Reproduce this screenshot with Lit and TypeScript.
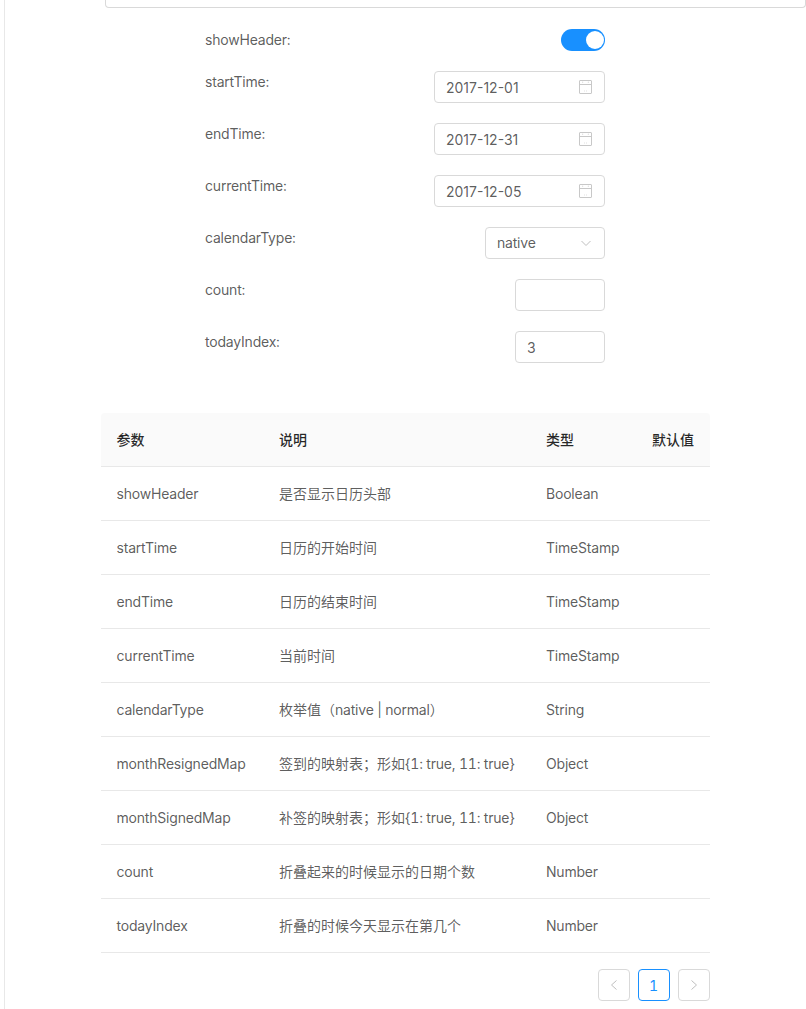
import { LitElement, html, css, svg } from "lit";
import { customElement } from "lit/decorators.js";

const calendar = svg`<path d="M1 .5h11a.5.5 0 0 1 .5.5v12a.5.5 0 0 1-.5.5H1a.5.5 0 0 1-.5-.5V1A.5.5 0 0 1 1 .5zM.5 4.5h12" fill="none" stroke="currentColor" stroke-width="1"/><path d="M3 2.2h1.2M8.8 2.2H10M5 11h.8M7 11h.8" stroke="currentColor" stroke-width=".7"/>`;

const rows: [string, string, string][] = [
  ["showHeader", "是否显示日历头部", "Boolean"],
  ["startTime", "日历的开始时间", "TimeStamp"],
  ["endTime", "日历的结束时间", "TimeStamp"],
  ["currentTime", "当前时间", "TimeStamp"],
  ["calendarType", "枚举值（native | normal）", "String"],
  ["monthResignedMap", "签到的映射表；形如{1: true, 11: true}", "Object"],
  ["monthSignedMap", "补签的映射表；形如{1: true, 11: true}", "Object"],
  ["count", "折叠起来的时候显示的日期个数", "Number"],
  ["todayIndex", "折叠的时候今天显示在第几个", "Number"],
];

const mixed = (text: string) =>
  text
    .split(/([\u3000-\u9fff\uff00-\uffef]+)/)
    .map((part, i) => (i % 2 ? html`<span class="cjk">${part}</span>` : part));

@customElement("app-root")
export class AppRoot extends LitElement {
  static styles = css`
    :host {
      display: block;
      width: 806px;
      height: 1009px;
      overflow: hidden;
      background: #fff;
      font-family: Inter, "Noto Sans CJK SC", sans-serif;
      font-size: 14px;
      letter-spacing: -0.2px;
      font-feature-settings: "tnum";
      color: rgba(0, 0, 0, 0.65);
    }
    .cjk { letter-spacing: 0; }
    .page {
      margin-left: 4px;
      border-left: 1px solid #e8e8e8;
      height: 1009px;
      box-sizing: border-box;
    }
    .card {
      margin-left: 100px;
      height: 8px;
      box-sizing: border-box;
      border: 1px solid #d9d9d9;
      border-top: none;
      border-radius: 0 0 4px 4px;
    }
    .form {
      width: 400px;
      margin: 21px 0 0 200px;
      display: flex;
      flex-direction: column;
      gap: 20px;
    }
    .item {
      display: flex;
      justify-content: space-between;
      align-items: flex-start;
    }
    .label {
      line-height: 21px;
    }
    .switch {
      width: 44px;
      height: 22px;
      border-radius: 11px;
      background: #1890ff;
      display: flex;
      justify-content: flex-end;
      align-items: center;
      padding: 0 1.5px;
      box-sizing: border-box;
    }
    .knob {
      width: 18px;
      height: 18px;
      border-radius: 50%;
      background: #fff;
    }
    .field {
      height: 32px;
      box-sizing: border-box;
      border: 1px solid #d9d9d9;
      border-radius: 4px;
      display: flex;
      align-items: center;
      justify-content: space-between;
      padding: 0 12px 0 11px;
      line-height: 30px;
    }
    .date {
      width: 171px;
      letter-spacing: 0;
      font-feature-settings: normal;
    }
    .date span, .number span { padding-top: 2px; }
    .select { width: 120px; }
    .number { width: 90px; }
    .cal {
      width: 13px;
      height: 14px;
      color: #c8c8c8;
      margin-top: -1px;
    }
    .chev {
      width: 12px;
      height: 12px;
      color: #bfbfbf;
    }
    .table {
      width: 609px;
      margin: 50px 0 0 96px;
    }
    .row {
      display: grid;
      grid-template-columns: 162px 267px 106px 74px;
      height: 54px;
      align-items: center;
      box-sizing: border-box;
      border-bottom: 1px solid #e8e8e8;
      line-height: 21px;
    }
    .row > span { padding-left: 16px; white-space: nowrap; }
    .row > span:first-child { padding-left: 15.5px; }
    .head {
      background: #fafafa;
      color: rgba(0, 0, 0, 0.85);
      font-weight: 500;
      letter-spacing: 0;
      border-radius: 4px 4px 0 0;
    }
    .head > span:last-child { padding-left: 0; text-align: right; padding-right: 16px; }
    .pager {
      display: flex;
      justify-content: flex-end;
      gap: 8px;
      margin-top: 16px;
    }
    .page-btn {
      width: 32px;
      height: 32px;
      box-sizing: border-box;
      border: 1px solid #d9d9d9;
      border-radius: 4px;
      display: flex;
      align-items: center;
      justify-content: center;
      color: #bfbfbf;
    }
    .page-btn svg { width: 12px; height: 12px; }
    .page-btn.active {
      border-color: #1890ff;
      color: #1890ff;
      padding-right: 1px;
    }
  `;

  private field(cls: string, value: string, icon?: unknown) {
    return html`<div class="field ${cls}"><span>${value}</span>${icon ?? ""}</div>`;
  }

  private date(value: string) {
    return this.field(
      "date",
      value,
      html`<svg class="cal" viewBox="0 0 13 14">${calendar}</svg>`
    );
  }

  render() {
    const chev = html`<svg class="chev" viewBox="0 0 12 12"><path d="M1.5 4l4.5 4.5L10.5 4" fill="none" stroke="currentColor"/></svg>`;
    return html`
      <div class="page">
        <div class="card"></div>
        <div class="form">
          <div class="item">
            <span class="label">showHeader:</span>
            <div class="switch"><div class="knob"></div></div>
          </div>
          <div class="item"><span class="label">startTime:</span>${this.date("2017-12-01")}</div>
          <div class="item"><span class="label">endTime:</span>${this.date("2017-12-31")}</div>
          <div class="item"><span class="label">currentTime:</span>${this.date("2017-12-05")}</div>
          <div class="item"><span class="label">calendarType:</span>${this.field("select", "native", chev)}</div>
          <div class="item"><span class="label">count:</span>${this.field("number", "")}</div>
          <div class="item"><span class="label">todayIndex:</span>${this.field("number", "3")}</div>
        </div>
        <div class="table">
          <div class="row head"><span>参数</span><span>说明</span><span>类型</span><span>默认值</span></div>
          ${rows.map(
            (r) => html`<div class="row"><span>${r[0]}</span><span>${mixed(r[1])}</span><span>${r[2]}</span><span></span></div>`
          )}
          <div class="pager">
            <div class="page-btn"><svg viewBox="0 0 12 12"><path d="M8.5 1.5L3.5 6l5 4.5" fill="none" stroke="currentColor"/></svg></div>
            <div class="page-btn active">1</div>
            <div class="page-btn"><svg viewBox="0 0 12 12"><path d="M3.5 1.5L8.5 6l-5 4.5" fill="none" stroke="currentColor"/></svg></div>
          </div>
        </div>
      </div>
    `;
  }
}
